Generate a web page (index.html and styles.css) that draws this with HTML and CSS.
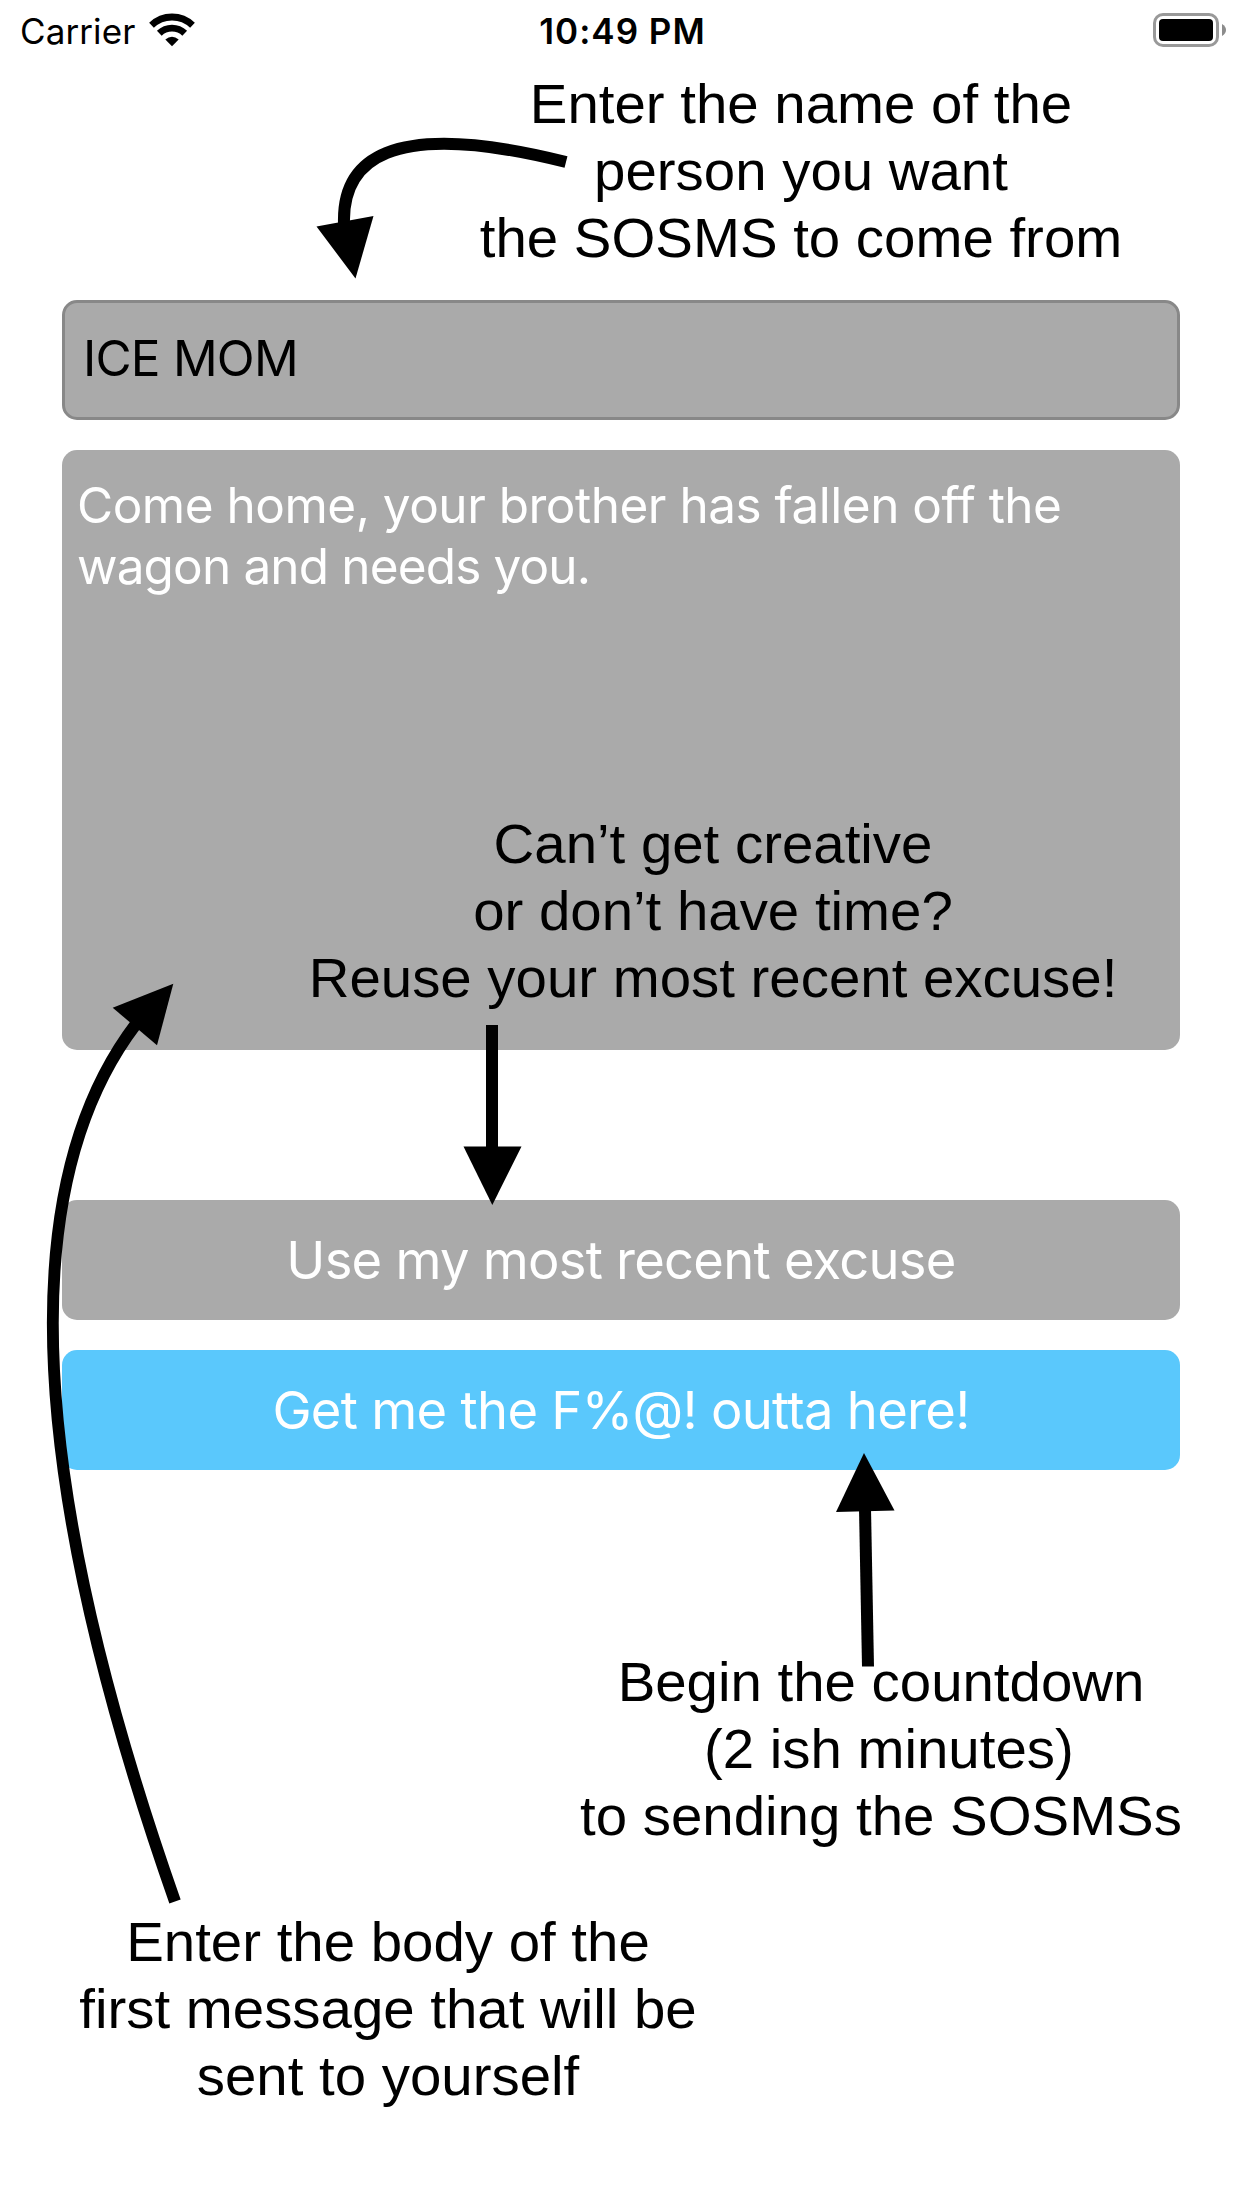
FILE: index.html
```html
<!DOCTYPE html>
<html lang="en">
<head>
<meta charset="utf-8">
<title>SOSMS</title>
<link rel="stylesheet" href="styles.css">
</head>
<body>
<main class="screen">
  <header class="status">
    <div class="status-left">
      <span class="carrier">Carrier</span>
      <svg class="wifi" width="48" height="36" viewBox="0 0 48 36">
        <g fill="none" stroke="#000" stroke-width="6.8">
          <path d="M3.5 13.3A29.5 29.5 0 0 1 44.5 13.3"/>
          <path d="M11.3 21.3A18.3 18.3 0 0 1 36.7 21.3"/>
        </g>
        <path d="M17.3 27.5Q24 22 30.7 27.5L24 34.2Z"/>
      </svg>
    </div>
    <time class="clock">10:49 PM</time>
    <div class="status-right">
      <svg width="74" height="34" viewBox="0 0 74 34">
        <rect x="1.5" y="1.5" width="63" height="31" rx="8.5" fill="none" stroke="#999" stroke-width="3"/>
        <rect x="6" y="6" width="54" height="22" rx="4"/>
        <path d="M69 11Q73 13.5 73 17T69 23Z" fill="#8c8c8c"/>
      </svg>
    </div>
  </header>

  <section class="form">
    <div class="field">ICE MOM</div>
    <div class="message">Come home, your brother has fallen off the<br><span class="message-end">wagon and needs you.</span></div>
    <div class="button recent">Use my most recent excuse</div>
    <div class="button send">Get me the F%@! outta here!</div>
  </section>

  <svg class="arrows" width="1242" height="2208" viewBox="0 0 1242 2208">
    <g fill="none" stroke="#000" stroke-width="12">
      <path d="M344 224C342 162 386 117 566 162"/>
      <path d="M492 1025V1150"/>
      <path d="M865 1508L868 1666.5"/>
      <path d="M136 1024Q-48 1266 175 1901.5"/>
    </g>
    <path d="M316.5 226.5L373.5 216L355.5 278.5Z"/>
    <path d="M463.5 1146.5H521.5L492.3 1205Z"/>
    <path d="M836 1512L894.5 1510.5L864 1453Z"/>
    <path d="M112.7 1007.7L157 1045.3L173.3 983.7Z"/>
  </svg>

  <p class="note note-name">Enter the name of the<br>person you want<br>the SOSMS to come from</p>
  <p class="note note-reuse">Can’t get creative<br>or don’t have time?<br>Reuse your most recent excuse!</p>
  <p class="note note-begin">Begin the countdown<br>&nbsp;(2 ish minutes)<br>to sending the SOSMSs</p>
  <p class="note note-body">Enter the body of the<br>first message that will be<br>sent to yourself</p>
</main>
</body>
</html>
```
FILE: styles.css
```css
body {
  margin: 0;
  background: #fff;
}

.screen {
  position: relative;
  width: 1242px;
  height: 2208px;
  overflow: hidden;
  color: #000;
  font-family: Inter, "Liberation Sans", sans-serif;
  font-feature-settings: "calt" 0;
}

.status {
  display: grid;
  grid-template-columns: 1fr auto 1fr;
  height: 60px;
  padding: 0 17px 0 20px;
  font-size: 35px;
  line-height: 62px;
}

.status-left {
  display: flex;
  gap: 13px;
}

.carrier {
  letter-spacing: 0.1px;
}

.wifi {
  margin-top: 12px;
}

.clock {
  font-weight: 600;
  letter-spacing: 1px;
}

.status-right {
  display: flex;
  justify-content: flex-end;
  margin-right: -2px;
  padding-top: 13px;
}

.form {
  display: flex;
  flex-direction: column;
  gap: 30px;
  padding: 240px 62px 0;
}

.field,
.message,
.button {
  box-sizing: border-box;
  border-radius: 15px;
  background: #aaa;
}

.field {
  height: 120px;
  padding-left: 18px;
  border: 3px solid #888;
  font-size: 49.5px;
  line-height: 110px;
  letter-spacing: -0.8px;
}

.message {
  height: 600px;
  margin-bottom: 120px;
  padding: 25px 15px;
  color: #fff;
  font-size: 49.5px;
  line-height: 61px;
  letter-spacing: -0.5px;
  white-space: nowrap;
}

.message-end {
  letter-spacing: -0.85px;
}

.button {
  height: 120px;
  color: #fff;
  font-size: 52.5px;
  line-height: 120px;
  letter-spacing: -0.75px;
  text-align: center;
}

.send {
  background: #5ac8fc;
  letter-spacing: -0.7px;
}

.arrows {
  position: absolute;
  top: 0;
  left: 0;
}

.note {
  position: absolute;
  margin: 0;
  font: 56.4px/67px "Liberation Sans", sans-serif;
  text-align: center;
  white-space: nowrap;
  transform: translateX(-50%);
}

.note-name {
  top: 70px;
  left: 801px;
}

.note-reuse {
  top: 810px;
  left: 713px;
}

.note-begin {
  top: 1648px;
  left: 881px;
}

.note-body {
  top: 1908px;
  left: 388px;
}
```
